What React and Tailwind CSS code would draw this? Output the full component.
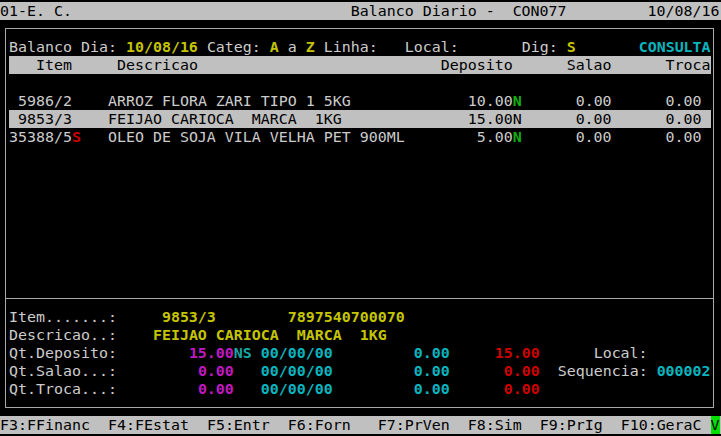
const Y = "text-[#c4c400] font-bold";
const C = "text-[#0ab4be] font-bold";
const M = "text-[#c018c0] font-bold";
const R = "text-[#cc0000] font-bold";
const G = "text-[#10b010] font-bold";

// one terminal row: segments are [column, text, classes], gaps filled with spaces
function Line({ base = 1, segs, className = "" }) {
  let col = base;
  const out = [];
  segs.forEach(([c, t, cls], i) => {
    if (c > col) out.push(<span key={"s" + i}>{" ".repeat(c - col)}</span>);
    out.push(
      <span key={i} className={cls}>
        {t}
      </span>
    );
    col = c + t.length;
  });
  return <div className={"h-[18px] whitespace-pre " + className}>{out}</div>;
}

const items = [
  { segs: [[2, "5986/2"], [12, "ARROZ FLORA ZARI TIPO 1 5KG"], [52, "10.00"], [57, "N", G], [64, "0.00"], [74, "0.00"]] },
  { segs: [[2, "9853/3"], [12, "FEIJAO CARIOCA  MARCA  1KG"], [52, "15.00"], [57, "N"], [64, "0.00"], [74, "0.00"]], sel: true },
  { segs: [[1, "35388/5"], [8, "S", R], [12, "OLEO DE SOJA VILA VELHA PET 900ML"], [53, "5.00"], [57, "N", G], [64, "0.00"], [74, "0.00"]] },
];

export default function App() {
  return (
    <div className="w-[721px] h-[436px] bg-black pt-[2px] overflow-hidden font-['DejaVu_Sans_Mono',monospace] text-[14.95px] leading-[18px] text-[#cccccc]">
      <Line
        base={0}
        className="bg-[#c0c0c0] text-black"
        segs={[[0, "01-E. C."], [39, "Balanco Diario -  CON077"], [72, "10/08/16"]]}
      />

      <div className="h-[396px] pt-[8px] pl-[5px] pr-[7px]">
        <div className="h-[380px] border border-[#a8a8a8] pt-[9px]">
          <Line
            className="pl-[3px]"
            segs={[
              [1, "Balanco Dia:"],
              [14, "10/08/16", Y],
              [23, "Categ:"],
              [30, "A", Y],
              [32, "a"],
              [34, "Z", Y],
              [36, "Linha:"],
              [45, "Local:"],
              [58, "Dig:"],
              [63, "S", Y],
              [71, "CONSULTA", C],
            ]}
          />
          <Line
            className="ml-[3px] w-[702px] bg-[#c0c0c0] text-black"
            segs={[[4, "Item"], [13, "Descricao"], [49, "Deposito"], [63, "Salao"], [74, "Troca"]]}
          />
          <div className="h-[18px]" />
          {items.map((it, i) => (
            <Line
              key={i}
              segs={it.segs}
              className={it.sel ? "ml-[3px] w-[702px] bg-[#c0c0c0] text-black" : "pl-[3px]"}
            />
          ))}
          <div className="h-[144px]" />

          <div className="h-[18px] pt-[8px]">
            <div className="h-px bg-[#a8a8a8]" />
          </div>

          <Line className="pl-[3px]" segs={[[1, "Item.......:"], [18, "9853/3", Y], [32, "7897540700070", Y]]} />
          <Line className="pl-[3px]" segs={[[1, "Descricao..:"], [17, "FEIJAO CARIOCA  MARCA  1KG", Y]]} />
          <Line
            className="pl-[3px]"
            segs={[
              [1, "Qt.Deposito:"],
              [21, "15.00", M],
              [26, "NS", "text-[#17a6a6] font-bold"],
              [29, "00/00/00", C],
              [46, "0.00", C],
              [55, "15.00", R],
              [66, "Local:"],
            ]}
          />
          <Line
            className="pl-[3px]"
            segs={[
              [1, "Qt.Salao...:"],
              [22, "0.00", M],
              [29, "00/00/00", C],
              [46, "0.00", C],
              [56, "0.00", R],
              [62, "Sequencia:"],
              [73, "000002", C],
            ]}
          />
          <Line
            className="pl-[3px]"
            segs={[[1, "Qt.Troca...:"], [22, "0.00", M], [29, "00/00/00", C], [46, "0.00", C], [56, "0.00", R]]}
          />
        </div>
      </div>

      <Line
        base={0}
        className="bg-[#c0c0c0] text-black"
        segs={[
          [0, "F3:FFinanc"],
          [12, "F4:FEstat"],
          [23, "F5:Entr"],
          [32, "F6:Forn"],
          [42, "F7:PrVen"],
          [52, "F8:Sim"],
          [60, "F9:PrIg"],
          [69, "F10:GeraC"],
          [79, "V", "bg-[#00e000]"],
        ]}
      />
    </div>
  );
}
